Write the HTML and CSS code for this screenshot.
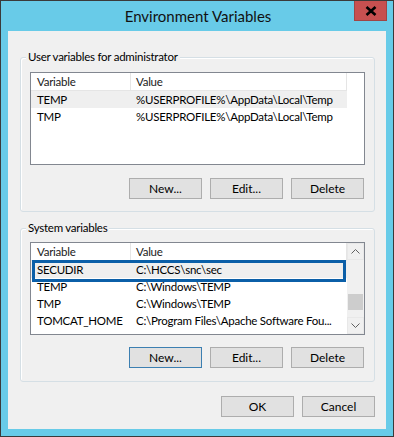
FILE: index.html
```html
<!DOCTYPE html>
<html>
<head>
<meta charset="utf-8">
<link rel="stylesheet" href="styles.css">
</head>
<body>
<div class="window">
  <div class="titlebar">
    <span class="title">Environment Variables</span>
    <div class="close"><svg width="12" height="10" viewBox="0 0 12 10"><path d="M1.5 1 L10.5 9 M10.5 1 L1.5 9" stroke="#000" stroke-width="2.6" fill="none"/></svg></div>
  </div>
  <div class="client">
    <div class="group g1">
      <span class="group-label">User variables for administrator</span>
      <div class="list">
        <div class="list-main">
          <div class="cols head"><div class="cell">Variable</div><div class="cell">Value</div></div>
          <div class="cols row sel"><div class="cell">TEMP</div><div class="cell">%USERPROFILE%\AppData\Local\Temp</div></div>
          <div class="cols row"><div class="cell">TMP</div><div class="cell">%USERPROFILE%\AppData\Local\Temp</div></div>
        </div>
      </div>
      <div class="btns">
        <button class="btn">New...</button>
        <button class="btn">Edit...</button>
        <button class="btn">Delete</button>
      </div>
    </div>
    <div class="group g2">
      <span class="group-label">System variables</span>
      <div class="list">
        <div class="list-main">
          <div class="cols head"><div class="cell">Variable</div><div class="cell">Value</div></div>
          <div class="cols row sel mark"><div class="cell">SECUDIR</div><div class="cell">C:\HCCS\snc\sec</div></div>
          <div class="cols row"><div class="cell">TEMP</div><div class="cell">C:\Windows\TEMP</div></div>
          <div class="cols row"><div class="cell">TMP</div><div class="cell">C:\Windows\TEMP</div></div>
          <div class="cols row"><div class="cell">TOMCAT_HOME</div><div class="cell">C:\Program Files\Apache Software Fou...</div></div>
        </div>
        <div class="scrollbar">
          <div class="arrow"><svg width="9" height="5" viewBox="0 0 9 5"><polyline points="0.5,4.5 4.5,0.5 8.5,4.5" stroke="#606060" fill="none"/></svg></div>
          <div class="track"><div class="thumb"></div></div>
          <div class="arrow"><svg width="9" height="5" viewBox="0 0 9 5"><polyline points="0.5,0.5 4.5,4.5 8.5,0.5" stroke="#606060" fill="none"/></svg></div>
        </div>
      </div>
      <div class="btns">
        <button class="btn default">New...</button>
        <button class="btn">Edit...</button>
        <button class="btn">Delete</button>
      </div>
    </div>
    <div class="dlg-btns">
      <button class="btn">OK</button>
      <button class="btn">Cancel</button>
    </div>
  </div>
</div>
</body>
</html>
```

FILE: styles.css
```css
html, body {
  margin: 0;
  padding: 0;
  overflow: hidden;
}
body {
  font-family: Lato, "Noto Sans", sans-serif;
  font-size: 11.5px;
  letter-spacing: -0.25px;
  color: #000;
}
.window {
  position: relative;
  width: 394px;
  height: 437px;
  box-sizing: border-box;
  border: 1px solid #3a3a3a;
  background: #68cbe8;
  display: flex;
  flex-direction: column;
}
.titlebar {
  height: 30px;
  flex: none;
  display: flex;
  align-items: center;
  justify-content: center;
}
.title {
  font-size: 15px;
  letter-spacing: 0;
  color: #111;
  line-height: 20px;
  padding-left: 2px;
}
.close {
  position: absolute;
  top: 0;
  right: 6px;
  width: 33px;
  height: 20px;
  box-sizing: border-box;
  background: #c75050;
  border: 1px solid #a04545;
  border-top: none;
  display: flex;
  align-items: center;
  justify-content: center;
}
.client {
  flex: 1;
  margin: 0 7px 7px;
  background: #f0f0f0;
  padding: 26px 11px 12px 12px;
  display: flex;
  flex-direction: column;
}
.group {
  position: relative;
  border: 1px solid #d5dfe5;
  border-radius: 3px;
  box-shadow: inset 1px 1px 0 #fff;
  padding: 14px 9px 12px 9px;
}
.g2 {
  margin-top: 16px;
  padding-top: 13px;
  padding-bottom: 13px;
}
.g2 .btns { margin-top: 12px; }
.group-label {
  position: absolute;
  top: -9px;
  left: 5px;
  padding: 0 2px;
  background: #f0f0f0;
  line-height: 16px;
}
.list {
  height: 93px;
  box-sizing: border-box;
  border: 1px solid #828790;
  background: #fff;
  display: flex;
}
.list-main {
  flex: 1;
}
.cols {
  display: grid;
  grid-template-columns: 100px 216px;
}
.cell {
  padding-left: 6px;
  white-space: nowrap;
  overflow: hidden;
}
.cell + .cell { padding-left: 5px; }
.head .cell {
  height: 17px;
  line-height: 17px;
  border-bottom: 1px solid #e5e5e5;
  border-right: 1px solid #e5e5e5;
  color: #1a1a1a;
}
.row .cell {
  height: 17px;
  line-height: 17px;
}
.row.sel .cell {
  background: #efefef;
}
.mark {
  position: relative;
}
.mark::after {
  content: "";
  position: absolute;
  top: -1px;
  left: 1px;
  width: 314px;
  height: 22px;
  box-sizing: border-box;
  border: 3px solid #0b5fa8;
}
.scrollbar {
  width: 17px;
  flex: none;
  background: #f0f0f0;
  display: flex;
  flex-direction: column;
}
.arrow {
  height: 17px;
  box-sizing: border-box;
  border: 1px solid #e8e8e8;
  display: flex;
  align-items: center;
  justify-content: center;
}
.track {
  flex: 1;
  padding: 34px 1px 0;
}
.thumb {
  height: 16px;
  background: #cdcdcd;
}
.btns {
  display: flex;
  justify-content: flex-end;
  gap: 8px;
  margin-top: 13px;
  margin-right: 1px;
}
.btn {
  width: 73px;
  height: 21px;
  box-sizing: border-box;
  border: 1px solid #adadad;
  background: #e1e1e1;
  font-family: inherit;
  font-size: 12px;
  letter-spacing: 0;
  color: #000;
  padding: 0;
  margin: 0;
  line-height: 19px;
}
.btn.default {
  border-color: #3c7fb1;
}
.dlg-btns {
  display: flex;
  justify-content: flex-end;
  gap: 8px;
  margin-top: 14px;
}
```
